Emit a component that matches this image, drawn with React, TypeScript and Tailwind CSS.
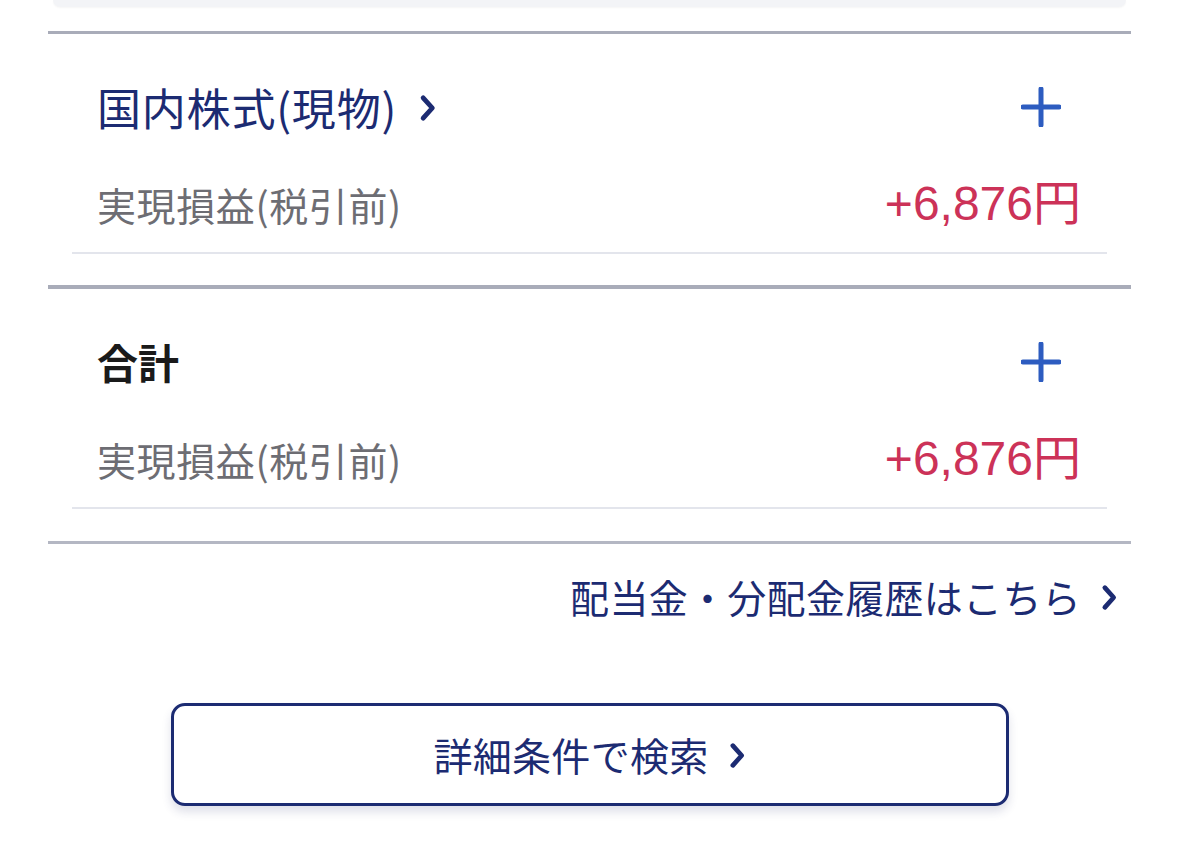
import React from 'react'

const jp = { fontFamily: '"Noto Sans CJK JP", "Noto Sans", sans-serif' }
const num = { fontFamily: '"Liberation Sans", "Noto Sans CJK JP", sans-serif' }

const Chevron: React.FC<{ className?: string }> = ({ className }) => (
  <svg viewBox="0 0 16 26" className={className} fill="none">
    <polyline
      points="3.5,3.5 12,13 3.5,22.5"
      stroke="currentColor"
      strokeWidth="4.5"
      strokeLinecap="round"
      strokeLinejoin="round"
    />
  </svg>
)

const Plus: React.FC = () => (
  <svg viewBox="0 0 40 40" className="h-[40px] w-[40px] text-[#2d5cc0]" fill="none">
    <path d="M20 2v36M2 20h36" stroke="currentColor" strokeWidth="5" strokeLinecap="round" />
  </svg>
)

type Section = {
  title: string
  link?: boolean
  amount: string
}

const ProfitRow: React.FC<{ amount: string }> = ({ amount }) => (
  <div className="mx-[24px]">
    <div className="flex h-[60px] items-center justify-between pl-[25px] pr-[26px]">
      <span className="text-[39px] text-[#6d6d73] tracking-[0.6px]" style={jp}>
        実現損益(税引前)
      </span>
      <span className="text-[48px] text-[#cc3258]" style={num}>
        {amount}
      </span>
    </div>
    <div className="mt-[18px] h-[2px] bg-[#e3e5ec]" />
  </div>
)

const App: React.FC = () => {
  const sections: Section[] = [
    { title: '国内株式(現物)', link: true, amount: '+6,876円' },
    { title: '合計', amount: '+6,876円' },
  ]

  return (
    <div className="min-h-[841px] w-[1179px] overflow-hidden bg-white" style={jp}>
      <div className="mx-[53px] h-[7px] rounded-b-[14px] bg-[#f3f4f7] shadow-[0_1px_2px_rgba(0,0,0,0.04)]" />
      <div className="px-[48px]">
        <div className="mt-[24px] h-[3px] bg-[#a9acb9]" />

        {sections.map((s, i) => (
          <div key={s.title}>
            <div className="mt-[43px] flex h-[60px] items-center justify-between pl-[49px] pr-[70px]">
              {s.link ? (
                <div className="flex items-center gap-[22px] text-[#1c2b72]">
                  <span className="text-[44px] tracking-[0.8px]">{s.title}</span>
                  <Chevron className="mt-[2px] h-[28px] w-[18px]" />
                </div>
              ) : (
                <span className="text-[41px] font-bold text-[#1a1a1a]">{s.title}</span>
              )}
              <Plus />
            </div>
            <div className="mt-[37px]">
              <ProfitRow amount={s.amount} />
            </div>
            {i === 0 ? (
              <div className="mt-[31px] h-[4px] bg-[#a9acb9]" />
            ) : (
              <div className="mt-[32px] h-[3px] bg-[#b4b7c3]" />
            )}
          </div>
        ))}

        <div className="mt-[22px] flex h-[60px] items-center justify-end gap-[20px] pr-[13px] text-[#1c2b72]">
          <span className="text-[39px] tracking-[0.3px]">配当金・分配金履歴はこちら</span>
          <Chevron className="mt-[2px] h-[27px] w-[17px]" />
        </div>

        <div className="mt-[77px] flex justify-center">
          <button className="flex h-[103px] w-[838px] items-center justify-center gap-[20px] rounded-[14px] border-[3px] border-[#1c2b72] bg-white text-[#1c2b72] shadow-[0_6px_10px_rgba(40,50,110,0.15)]">
            <span className="text-[39px] tracking-[0.3px]">詳細条件で検索</span>
            <Chevron className="mt-[2px] h-[27px] w-[17px]" />
          </button>
        </div>
      </div>
    </div>
  )
}

export default App
